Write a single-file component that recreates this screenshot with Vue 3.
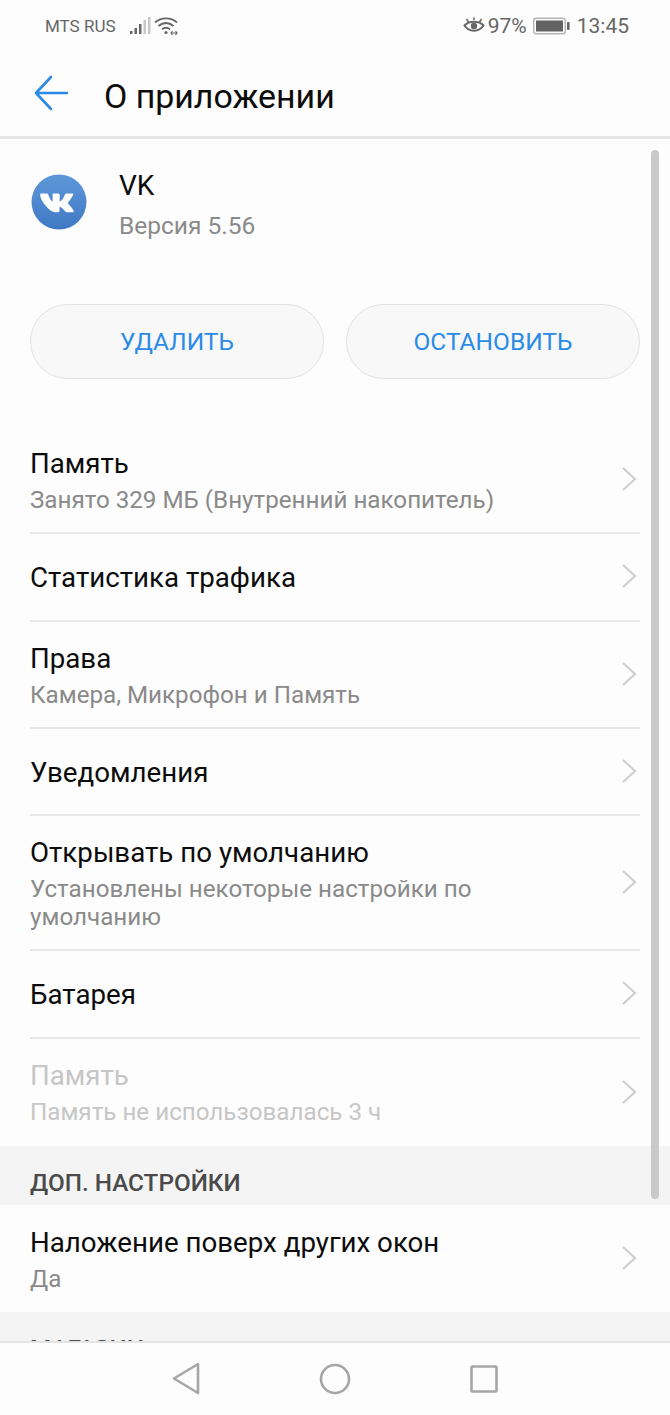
<script setup>
const rows = [
  { title: 'Память', sub: 'Занято 329 МБ (Внутренний накопитель)', h: 107 },
  { title: 'Статистика трафика', h: 88 },
  { title: 'Права', sub: 'Камера, Микрофон и Память', h: 107 },
  { title: 'Уведомления', h: 87 },
  { title: 'Открывать по умолчанию', sub: 'Установлены некоторые настройки по умолчанию', h: 135 },
  { title: 'Батарея', h: 88 },
  { title: 'Память', sub: 'Память не использовалась 3 ч', h: 107, off: true, last: true }
]
</script>

<template>
  <div class="phone">
    <div class="status">
      <div class="status-left">
        <span>MTS RUS</span>
        <svg class="signal" width="22" height="20" viewBox="0 0 22 20">
          <rect x="0" y="15" width="2.5" height="3" fill="#666" />
          <rect x="4.5" y="12" width="2.5" height="6" fill="#666" />
          <rect x="9" y="8" width="2.5" height="10" fill="#666" />
          <rect x="13.5" y="4" width="2.5" height="14" fill="#c8c8c8" />
          <rect x="18" y="1" width="2.5" height="17" fill="#c8c8c8" />
        </svg>
        <svg class="wifi" width="24" height="20" viewBox="0 0 24 20" fill="none" stroke="#666" stroke-width="1.8">
          <path d="M1 6.5C7 1 17 1 23 6.5" />
          <path d="M4.5 10C9 6 15 6 19.5 10" />
          <path d="M8 13.3C10.5 11.3 13.5 11.3 16 13.3" />
          <circle cx="12" cy="16.5" r="1.6" fill="#666" stroke="none" />
          <path d="M17 17h6M18.5 15l-1.5 2 1.5 2M21.5 15l1.5 2-1.5 2" stroke-width="1.1" />
        </svg>
      </div>
      <div class="status-right">
        <svg width="22" height="20" viewBox="0 0 22 20" fill="none" stroke="#666" stroke-width="2">
          <path d="M1.5 9.5C6 4.5 16 4.5 20.5 9.5C16 16.5 6 16.5 1.5 9.5Z" />
          <circle cx="11" cy="10" r="3.2" fill="#666" stroke="none" />
          <path d="M3.5 3l2 3M18.5 3l-2 3M11 1.5v2.5" stroke-width="1.6" />
        </svg>
        <span class="pct">97%</span>
        <svg class="batt" width="37" height="20" viewBox="0 0 37 20">
          <rect x="0.7" y="2.2" width="31.6" height="15.6" rx="2.5" fill="none" stroke="#b5b5b5" stroke-width="1.4" />
          <rect x="3" y="4.5" width="27" height="11" fill="#636363" />
          <rect x="34" y="6" width="2.6" height="8" rx="1" fill="#666" />
        </svg>
        <span class="time">13:45</span>
      </div>
    </div>

    <header class="topbar">
      <svg width="36" height="36" viewBox="0 0 36 36" fill="none" stroke="#2a8be8" stroke-width="2.6" stroke-linecap="round" stroke-linejoin="round">
        <path d="M3 18H34M18 2L3 18L18 34" />
      </svg>
      <h1>О приложении</h1>
    </header>

    <main class="content">
      <div class="scrollbar"></div>

      <div class="app">
        <svg class="vk" width="56" height="56" viewBox="0 0 56 56">
          <defs>
            <linearGradient id="vkbg" x1="0" y1="0" x2="0" y2="1">
              <stop offset="0" stop-color="#5f97da" />
              <stop offset="1" stop-color="#3f79c4" />
            </linearGradient>
          </defs>
          <circle cx="28" cy="28" r="27.5" fill="url(#vkbg)" />
          <path fill="#fff" d="M10 19.5h6.2c.5 0 .8.3 1 .8 1.2 3.8 3 7.2 4.4 7.2V19.7c-.1-.1 4.8-.2 6.2 0 .7.1.9.5.9 1v6.8c1.800 0 4.400-4.400 5.400-7.200.2-.5.5-.8 1-.8h6.200c.9 0 1.100.5.800 1.300-1 2.800-4.900 7.600-4.900 7.600-.4.600-.400.900 0 1.400 0 0 4.200 4.300 5.500 7 .4.800 0 1.400-.8 1.400h-6.200c-.800 0-1.200-.400-1.800-1.100-1.500-1.700-3.700-4.400-5.400-4.400v4.400c0 .800-.500 1.100-1.600 1.100h-2.800C18.500 37.900 9 26.500 9.200 20.500c0-.600.200-1 .8-1z" />
        </svg>
        <div class="app-text">
          <div class="app-name">VK</div>
          <div class="app-ver">Версия 5.56</div>
        </div>
      </div>

      <div class="buttons">
        <button>УДАЛИТЬ</button>
        <button>ОСТАНОВИТЬ</button>
      </div>

      <div class="list first">
        <div
          v-for="(row, i) in rows"
          :key="i"
          class="row"
          :class="{ off: row.off, last: row.last }"
          :style="{ height: row.h + 'px' }"
        >
          <div class="row-text">
            <div class="row-title">{{ row.title }}</div>
            <div v-if="row.sub" class="row-sub">{{ row.sub }}</div>
          </div>
          <svg class="chev" width="16" height="26" viewBox="0 0 16 26" fill="none" stroke="#cfcfcf" stroke-width="2.2">
            <path d="M2 2L14 13L2 24" />
          </svg>
        </div>
      </div>

      <div class="section">ДОП. НАСТРОЙКИ</div>
      <div class="list">
        <div class="row last" style="height: 107px">
          <div class="row-text">
            <div class="row-title">Наложение поверх других окон</div>
            <div class="row-sub">Да</div>
          </div>
          <svg class="chev" width="16" height="26" viewBox="0 0 16 26" fill="none" stroke="#cfcfcf" stroke-width="2.2">
            <path d="M2 2L14 13L2 24" />
          </svg>
        </div>
      </div>
      <div class="section">МАГАЗИН</div>
    </main>

    <nav class="navbar">
      <svg width="30" height="34" viewBox="0 0 30 34" fill="none" stroke="#a6a6a6" stroke-width="2.6" stroke-linejoin="round">
        <path d="M27 2V31L3 16.500Z" />
      </svg>
      <svg width="32" height="32" viewBox="0 0 32 32" fill="none" stroke="#a6a6a6" stroke-width="2.6">
        <circle cx="16" cy="16" r="14" />
      </svg>
      <svg width="30" height="30" viewBox="0 0 30 30" fill="none" stroke="#a6a6a6" stroke-width="2.6" stroke-linejoin="round">
        <rect x="2.500" y="2.500" width="25" height="25" rx="1" />
      </svg>
    </nav>
  </div>
</template>

<style scoped>
.phone {
  width: 670px;
  height: 1415px;
  display: flex;
  flex-direction: column;
  overflow: hidden;
  background: #fdfdfd;
  font-family: Roboto, sans-serif;
}

.status {
  height: 52px;
  flex: none;
  display: flex;
  justify-content: space-between;
  align-items: center;
  padding: 0 41px 0 45px;
  color: #666;
}

.status-left {
  display: flex;
  align-items: center;
  font-size: 17px;
}

.signal {
  margin-left: 14px;
}

.wifi {
  margin-left: 2px;
}

.status-right {
  display: flex;
  align-items: center;
  font-size: 21px;
}

.pct {
  margin-left: 3px;
}

.batt {
  margin-left: 6px;
}

.time {
  margin-left: 7px;
}

.topbar {
  height: 87px;
  flex: none;
  display: flex;
  align-items: center;
  padding-left: 33px;
  padding-bottom: 2px;
  box-sizing: border-box;
  border-bottom: 3px solid #e6e6e6;
}

.topbar h1 {
  margin: 6px 0 0 35px;
  font-size: 33.900px;
  font-weight: 400;
  color: #0c0c0c;
}

.content {
  position: relative;
  flex: 1;
  min-height: 0;
  overflow: hidden;
}

.scrollbar {
  position: absolute;
  top: 11px;
  right: 11px;
  width: 8px;
  height: 1049px;
  border-radius: 4px;
  background: #c9c9c9;
}

.app {
  display: flex;
  padding: 35px 0 0 31px;
  height: 130px;
  box-sizing: border-box;
}

.app-text {
  margin-left: 32px;
  margin-top: -5px;
}

.app-name {
  font-size: 28px;
  line-height: 34px;
  color: #0c0c0c;
}

.app-ver {
  margin-top: 7px;
  font-size: 24.500px;
  line-height: 32px;
  color: #8a8a8a;
}

.buttons {
  display: flex;
  gap: 22px;
  padding: 35px 30px 0;
  height: 75px;
  box-sizing: content-box;
}

.buttons button {
  flex: 1;
  height: 75px;
  border: 1px solid #e2e2e2;
  border-radius: 38px;
  background: #f8f8f8;
  color: #2a8be8;
  font-family: inherit;
  font-size: 24.500px;
}

.list {
  padding: 0 30px;
}

.list.first {
  margin-top: 48px;
}

.row {
  display: flex;
  align-items: center;
  justify-content: space-between;
  box-sizing: border-box;
  border-bottom: 2px solid #e8e8e8;
}

.row.last {
  border-bottom: 0;
}

.row-text {
  padding-top: 2px;
}

.row.off .row-text {
  padding-top: 0;
}

.row-title {
  font-size: 27.700px;
  line-height: 34px;
  color: #0c0c0c;
}

.row-sub {
  margin-top: 5px;
  font-size: 24.200px;
  line-height: 28px;
  color: #8a8a8a;
  max-width: 490px;
}

.row.off .row-title,
.row.off .row-sub {
  color: #c6c6c6;
}

.chev {
  flex: none;
  margin: 0 3px 2px 0;
}

.section {
  height: 59px;
  box-sizing: border-box;
  padding: 22px 0 0 30px;
  background: #f4f4f4;
  font-size: 24.300px;
  font-weight: 500;
  line-height: 30px;
  color: #4a4a4a;
}

.navbar {
  height: 74px;
  flex: none;
  box-sizing: border-box;
  border-top: 2px solid #e4e4e4;
  background: #fdfdfd;
  display: flex;
  align-items: center;
  justify-content: center;
  gap: 118px;
  padding-right: 1px;
}
</style>
